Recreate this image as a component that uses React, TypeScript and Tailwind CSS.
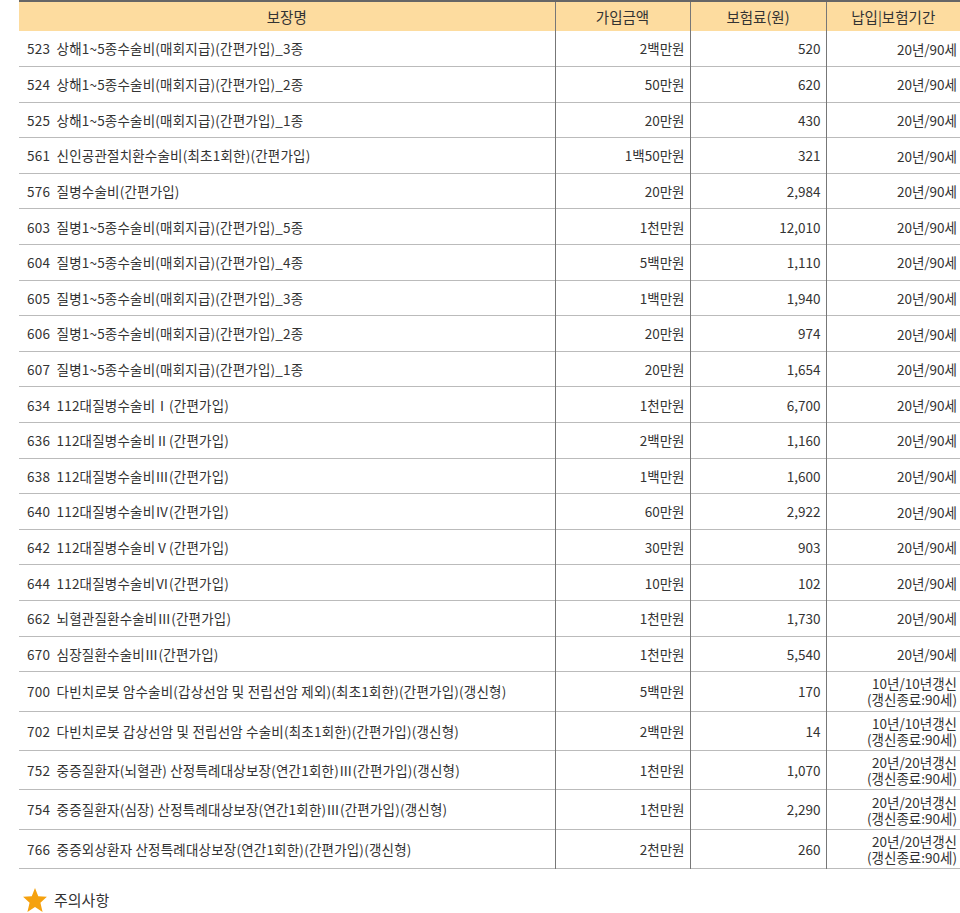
const rows: [string, string, string, string, string?][] = [
  ["523  상해1~5종수술비(매회지급)(간편가입)_3종", "2백만원", "520", "20년/90세"],
  ["524  상해1~5종수술비(매회지급)(간편가입)_2종", "50만원", "620", "20년/90세"],
  ["525  상해1~5종수술비(매회지급)(간편가입)_1종", "20만원", "430", "20년/90세"],
  ["561  신인공관절치환수술비(최초1회한)(간편가입)", "1백50만원", "321", "20년/90세"],
  ["576  질병수술비(간편가입)", "20만원", "2,984", "20년/90세"],
  ["603  질병1~5종수술비(매회지급)(간편가입)_5종", "1천만원", "12,010", "20년/90세"],
  ["604  질병1~5종수술비(매회지급)(간편가입)_4종", "5백만원", "1,110", "20년/90세"],
  ["605  질병1~5종수술비(매회지급)(간편가입)_3종", "1백만원", "1,940", "20년/90세"],
  ["606  질병1~5종수술비(매회지급)(간편가입)_2종", "20만원", "974", "20년/90세"],
  ["607  질병1~5종수술비(매회지급)(간편가입)_1종", "20만원", "1,654", "20년/90세"],
  ["634  112대질병수술비Ⅰ(간편가입)", "1천만원", "6,700", "20년/90세"],
  ["636  112대질병수술비Ⅱ(간편가입)", "2백만원", "1,160", "20년/90세"],
  ["638  112대질병수술비Ⅲ(간편가입)", "1백만원", "1,600", "20년/90세"],
  ["640  112대질병수술비Ⅳ(간편가입)", "60만원", "2,922", "20년/90세"],
  ["642  112대질병수술비Ⅴ(간편가입)", "30만원", "903", "20년/90세"],
  ["644  112대질병수술비Ⅵ(간편가입)", "10만원", "102", "20년/90세"],
  ["662  뇌혈관질환수술비Ⅲ(간편가입)", "1천만원", "1,730", "20년/90세"],
  ["670  심장질환수술비Ⅲ(간편가입)", "1천만원", "5,540", "20년/90세"],
  ["700  다빈치로봇 암수술비(갑상선암 및 전립선암 제외)(최초1회한)(간편가입)(갱신형)", "5백만원", "170", "10년/10년갱신", "(갱신종료:90세)"],
  ["702  다빈치로봇 갑상선암 및 전립선암 수술비(최초1회한)(간편가입)(갱신형)", "2백만원", "14", "10년/10년갱신", "(갱신종료:90세)"],
  ["752  중증질환자(뇌혈관) 산정특례대상보장(연간1회한)Ⅲ(간편가입)(갱신형)", "1천만원", "1,070", "20년/20년갱신", "(갱신종료:90세)"],
  ["754  중증질환자(심장) 산정특례대상보장(연간1회한)Ⅲ(간편가입)(갱신형)", "1천만원", "2,290", "20년/20년갱신", "(갱신종료:90세)"],
  ["766  중증외상환자 산정특례대상보장(연간1회한)(간편가입)(갱신형)", "2천만원", "260", "20년/20년갱신", "(갱신종료:90세)"],
];

export default function App() {
  return (
    <div className="bg-white pl-[19px] text-[13.5px] text-[#333] h-[913px] overflow-hidden" style={{ fontFamily: '"Noto Sans CJK KR", "Noto Sans", sans-serif' }}>
      <table className="w-[941px] border-collapse table-fixed border-t-2 border-[#666]">
        <colgroup>
          <col className="w-[536px]" />
          <col className="w-[135px]" />
          <col className="w-[136px]" />
          <col className="w-[134px]" />
        </colgroup>
        <thead>
          <tr className="bg-[#fddc9f] h-[30px] text-[14.5px]">
            <th className="font-normal text-center">보장명</th>
            <th className="font-normal text-center border-l border-[#777]">가입금액</th>
            <th className="font-normal text-center border-l border-[#777]">보험료(원)</th>
            <th className="font-normal text-center border-l border-[#777]">납입|보험기간</th>
          </tr>
        </thead>
        <tbody>
          {rows.map((r, i) => (
            <tr key={i} className={`border-b border-[#bbb] ${r[4] ? "h-[39.4px]" : "h-[35.6px]"}`}>
              <td className="pl-[8px] whitespace-pre tracking-[0.2px]">{r[0]}</td>
              <td className="text-right pr-[5px] border-l border-[#777]">{r[1]}</td>
              <td className="text-right pr-[5px] border-l border-[#777]">{r[2]}</td>
              <td className="text-right pr-[3px] border-l border-[#777] leading-[16px]">
                {r[3]}
                {r[4] && <div>{r[4]}</div>}
              </td>
            </tr>
          ))}
        </tbody>
      </table>
      <div className="mt-[18px] flex items-center gap-[6px] pl-[3px] text-[15px]">
        <svg width="26" height="26" viewBox="0 0 24 24">
          <polygon points="12,1 15,8.5 23,9 17,14.5 19,23 12,18.5 5,23 7,14.5 1,9 9,8.5" fill="#f5a10e" />
        </svg>
        <span>주의사항</span>
      </div>
    </div>
  );
}
